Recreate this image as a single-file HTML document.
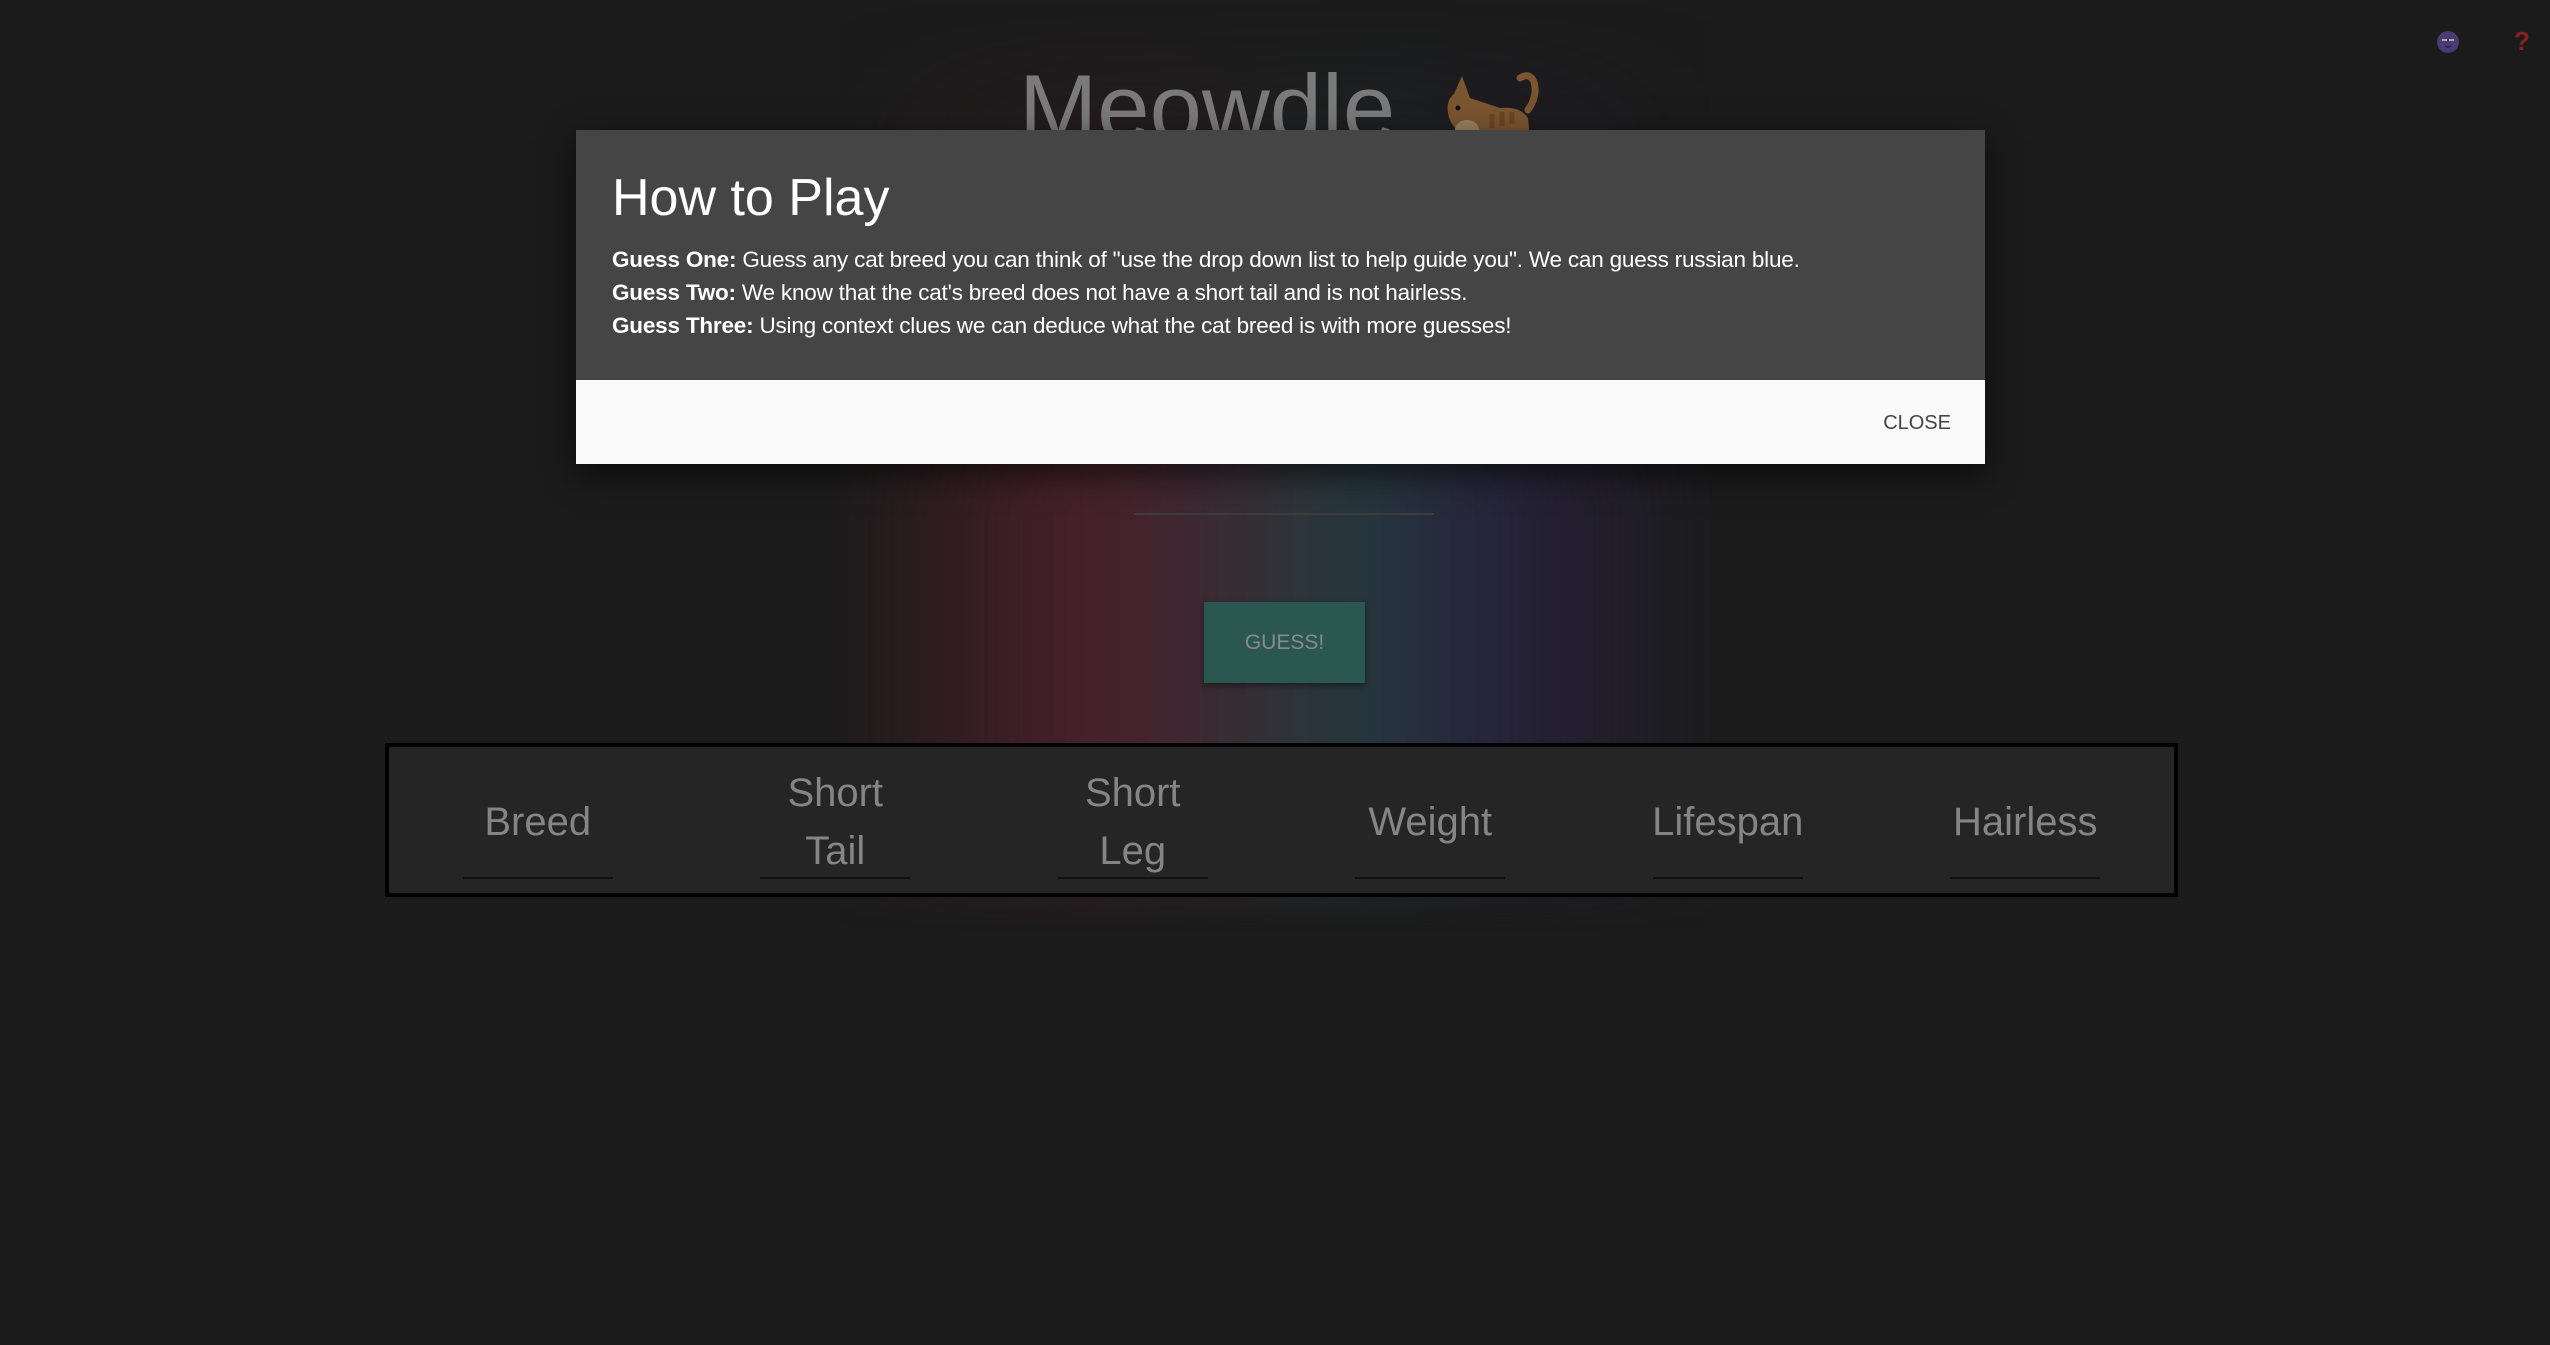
<!DOCTYPE html>
<html><head><meta charset="utf-8"><style>
html,body{margin:0;padding:0;width:2550px;height:1345px;overflow:hidden;background:#1b1b1b;font-family:"Liberation Sans",sans-serif;}
.glow{position:absolute;left:840px;top:0;width:870px;height:930px;
background:linear-gradient(90deg,rgba(27,27,27,0) 0%,rgba(75,32,42,1) 28%,rgba(62,44,54,.9) 44%,rgba(36,60,62,1) 58%,rgba(40,34,60,1) 75%,rgba(27,27,27,0) 100%);
-webkit-mask-image:linear-gradient(180deg,rgba(0,0,0,0) 0%,rgba(0,0,0,.35) 25%,rgba(0,0,0,1) 55%,rgba(0,0,0,1) 90%,rgba(0,0,0,0) 100%);filter:blur(50px);}
.title{position:absolute;left:1019px;top:48px;font-size:94px;color:#7a7a7a;line-height:120px;}
.modal{position:absolute;left:576px;top:130px;width:1409px;height:334px;box-shadow:0 10px 30px rgba(0,0,0,.6);}
.mtop{background:#454545;height:250px;color:#fff;padding:0 36px;box-sizing:border-box;}
.mtop h1{margin:0;padding-top:33px;font-weight:normal;font-size:52px;line-height:70px;}
.mtop p{margin:10px 0 0;font-size:22.5px;line-height:33px;letter-spacing:-.2px}
.mbot{background:#fafafa;height:84px;position:relative;}
.close{position:absolute;right:34px;top:32px;font-size:20px;color:#444;}
.line{position:absolute;left:1134px;top:513px;width:300px;height:2px;background:#3d3d3d;}
.btn{position:absolute;left:1204px;top:602px;width:161px;height:81px;background:#2a5750;color:#8a8a8a;font-size:21px;text-align:center;line-height:81px;box-shadow:0 3px 6px rgba(0,0,0,.4);}
.table{position:absolute;left:385px;top:743px;width:1793px;height:154px;border:4px solid #000;box-sizing:border-box;background:#252525;display:flex;}
.col{flex:1;position:relative;color:#858585;font-size:40px;text-align:center;}
.col span{position:absolute;left:0;right:0;top:11px;height:128px;display:flex;align-items:center;justify-content:center;line-height:58px;}
.col i{position:absolute;left:50%;margin-left:-75px;width:150px;bottom:14px;height:2px;background:#111;}
</style></head><body>
<div class="glow"></div>
<div class="title">Meowdle</div>
<svg style="position:absolute;left:1440px;top:68px" width="100" height="70" viewBox="0 0 100 70">
<path d="M80 10 q10-6 14 4 q4 14-6 28" stroke="#7a5530" stroke-width="7" fill="none" stroke-linecap="round"/>
<path d="M22 8 L30 30 L60 40 Q80 38 88 50 L90 70 L28 70 Q10 60 8 45 Q6 32 14 26 Z" fill="#7a5530"/>
<ellipse cx="27" cy="62" rx="12" ry="10" fill="#9a8060"/>
<circle cx="18" cy="40" r="2.5" fill="#111"/>
<path d="M52 46 v14 M62 44 v14 M72 44 v12" stroke="#6a4525" stroke-width="5"/>
</svg>
<svg style="position:absolute;left:2436px;top:30px" width="24" height="24" viewBox="0 0 24 24"><circle cx="12" cy="12" r="11" fill="#4a3a75"/><path d="M6 10h5M13 10h5" stroke="#aaa" stroke-width="2"/><path d="M9 16q3 2 6 0" stroke="#222" stroke-width="1.2" fill="none"/></svg>
<div style="position:absolute;left:2514px;top:26px;color:#8a2020;font-size:26px;font-weight:bold">?</div>
<div class="line"></div>
<div class="btn">GUESS!</div>
<div class="table">
<div class="col"><span>Breed</span><i></i></div>
<div class="col"><span>Short<br>Tail</span><i></i></div>
<div class="col"><span>Short<br>Leg</span><i></i></div>
<div class="col"><span>Weight</span><i></i></div>
<div class="col"><span>Lifespan</span><i></i></div>
<div class="col"><span>Hairless</span><i></i></div>
</div>
<div class="modal">
<div class="mtop"><h1>How to Play</h1>
<p><b>Guess One:</b> Guess any cat breed you can think of "use the drop down list to help guide you". We can guess russian blue.<br>
<b>Guess Two:</b> We know that the cat's breed does not have a short tail and is not hairless.<br>
<b>Guess Three:</b> Using context clues we can deduce what the cat breed is with more guesses!</p></div>
<div class="mbot"><span class="close">CLOSE</span></div>
</div>
</body></html>
